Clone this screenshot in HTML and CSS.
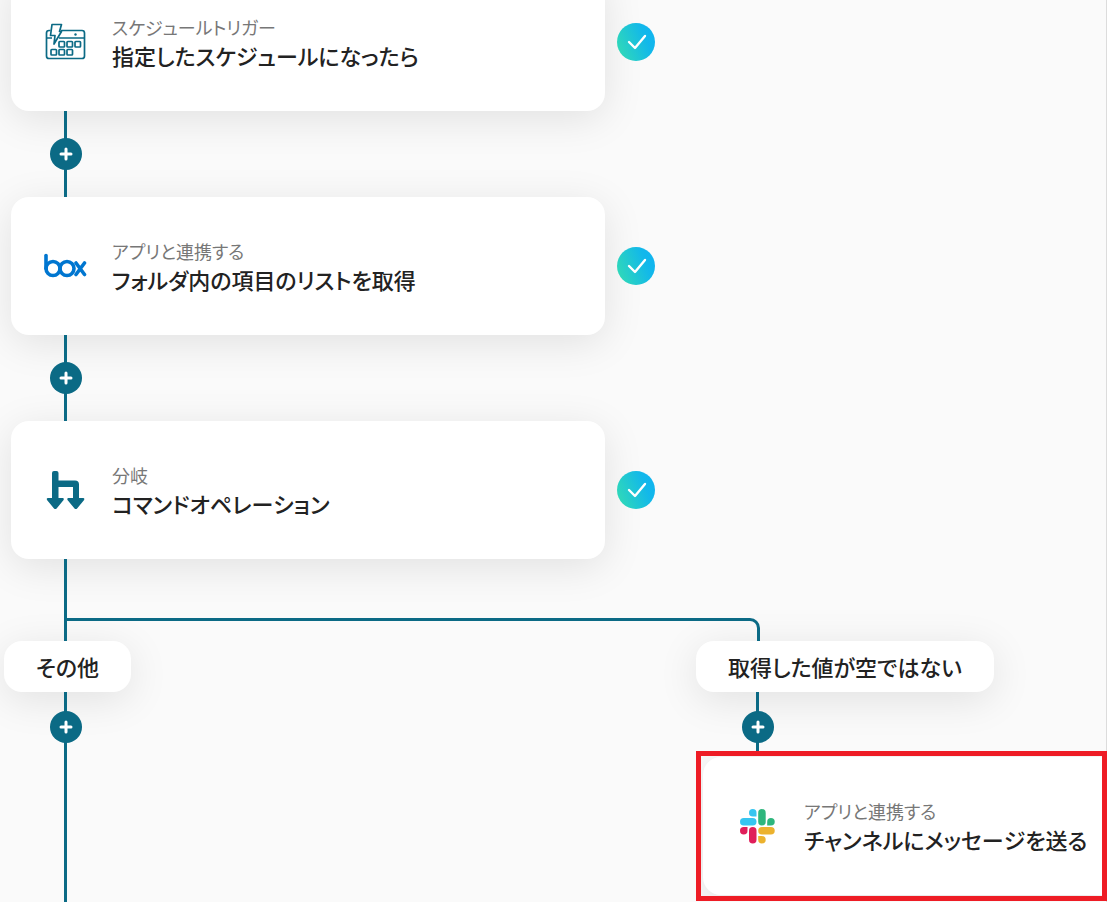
FILE: index.html
```html
<!DOCTYPE html>
<html lang="ja">
<head>
<meta charset="utf-8">
<title>フロー</title>
<link rel="stylesheet" href="styles.css">
</head>
<body>
<svg class="defs" aria-hidden="true">
  <defs>
    <linearGradient id="done" x1="0" y1="0.7" x2="1" y2="0.3">
      <stop offset="0" stop-color="#30d9b8"/>
      <stop offset="0.75" stop-color="#12b8ea"/>
      <stop offset="1" stop-color="#10b4f0"/>
    </linearGradient>
    <symbol id="check" viewBox="0 0 38 38">
      <circle cx="19" cy="19" r="19" fill="url(#done)"/>
      <path d="M12 19l6 6 10-12" fill="none" stroke="#fff" stroke-width="2.4" stroke-linecap="round" stroke-linejoin="round"/>
    </symbol>
    <symbol id="plus" viewBox="0 0 32 32">
      <path d="M16 11v10M11 16h10" fill="none" stroke="#fff" stroke-width="3" stroke-linecap="round"/>
    </symbol>
  </defs>
</svg>
<main class="flow">
  <section class="trunk">
    <div class="step">
      <article class="card">
        <svg class="icon" viewBox="0 0 44 44" fill="none" stroke="#0b6a85" stroke-width="1.7" stroke-linejoin="round">
          <path d="M7.500 10.500H6A2.500 2.500 0 0 0 3.500 13v23a2.500 2.500 0 0 0 2.500 2.500h33a2.500 2.500 0 0 0 2.500-2.500V13a2.500 2.500 0 0 0-2.500-2.500H18"/>
          <path d="M3.500 18H9M16 18h25.500"/>
          <path d="M9 4.500h9.500l-2 7h2L11 24l1-8.500H7.500z"/>
          <rect x="16" y="21.500" width="5.500" height="5.500" rx="0.8"/>
          <rect x="24" y="21.500" width="5.500" height="5.500" rx="0.8"/>
          <rect x="32" y="21.500" width="5.500" height="5.500" rx="0.8"/>
          <rect x="8" y="29.500" width="5.500" height="5.500" rx="0.8"/>
          <rect x="16" y="29.500" width="5.500" height="5.500" rx="0.8"/>
          <rect x="24" y="29.500" width="5.500" height="5.500" rx="0.8"/>
          <circle cx="32.500" cy="14.500" r="1.200" fill="#0b6a85" stroke="none"/>
        </svg>
        <div class="text">
          <p class="kind">スケジュールトリガー</p>
          <h2 class="name">指定したスケジュールになったら</h2>
        </div>
      </article>
      <svg class="done" role="img" aria-label="完了"><use href="#check"/></svg>
    </div>
    <div class="link">
      <button class="add" type="button" aria-label="追加"><svg class="sign"><use href="#plus"/></svg></button>
    </div>
    <div class="step">
      <article class="card">
        <svg class="icon" viewBox="0 0 44 44" fill="none" stroke="#0076d0" stroke-width="3.6" stroke-linecap="round">
          <path d="M3 11.500v13"/>
          <circle cx="10" cy="24.500" r="7"/>
          <circle cx="24" cy="24.500" r="7"/>
          <path d="M33 19l8.500 11.500M41.500 19l-8.500 11.500"/>
        </svg>
        <div class="text">
          <p class="kind">アプリと連携する</p>
          <h2 class="name">フォルダ内の項目のリストを取得</h2>
        </div>
      </article>
      <svg class="done" role="img" aria-label="完了"><use href="#check"/></svg>
    </div>
    <div class="link">
      <button class="add" type="button" aria-label="追加"><svg class="sign"><use href="#plus"/></svg></button>
    </div>
    <div class="step">
      <article class="card">
        <svg class="icon" viewBox="0 0 44 44" fill="#0b6a85">
          <path d="M9 5q0-2 2-2h2.500q2 0 2 2v7.500H32q4 0 4 4V30h4.500q1.500.5.6 1.900l-7 8.600q-1.300 1.200-2.600 0l-7-8.600q-.9-1.400.6-1.900H30V19H15.500v11H20q1.500.5.6 1.900l-7 8.600q-1.300 1.200-2.600 0l-7-8.600q-.9-1.400.6-1.900H9z"/>
        </svg>
        <div class="text">
          <p class="kind">分岐</p>
          <h2 class="name">コマンドオペレーション</h2>
        </div>
      </article>
      <svg class="done" role="img" aria-label="完了"><use href="#check"/></svg>
    </div>
  </section>
  <div class="fork"><div class="arm"></div></div>
  <section class="lanes">
    <div class="lane">
      <h3 class="case">その他</h3>
      <div class="rail open">
        <button class="add" type="button" aria-label="追加"><svg class="sign"><use href="#plus"/></svg></button>
      </div>
    </div>
    <div class="lane">
      <h3 class="case">取得した値が空ではない</h3>
      <div class="rail">
        <button class="add" type="button" aria-label="追加"><svg class="sign"><use href="#plus"/></svg></button>
      </div>
      <div class="mark">
        <article class="card">
          <svg class="icon" viewBox="0 0 44 44">
            <g fill="#36c5f0"><rect x="5" y="14" width="16.500" height="7.500" rx="3.750"/><path d="M21.500 12.500h-3.750A3.750 3.750 0 1 1 21.500 8.750z"/></g>
            <g fill="#2eb67d"><rect x="23.200" y="5" width="7.500" height="16.500" rx="3.750"/><path d="M32.200 21.500v-3.750a3.750 3.750 0 1 1 3.750 3.750z"/></g>
            <g fill="#ecb22e"><rect x="23.200" y="23" width="16.500" height="7.500" rx="3.750"/><path d="M23.200 32h3.750a3.750 3.750 0 1 1-3.750 3.750z"/></g>
            <g fill="#e01e5a"><rect x="14" y="23" width="7.500" height="16.500" rx="3.750"/><path d="M12.500 23v3.750A3.750 3.750 0 1 1 8.750 23z"/></g>
          </svg>
          <div class="text">
            <p class="kind">アプリと連携する</p>
            <h2 class="name">チャンネルにメッセージを送る</h2>
          </div>
        </article>
      </div>
    </div>
  </section>
</main>
</body>
</html>
```
FILE: styles.css
```css
* {
  box-sizing: border-box;
}

body {
  margin: 0;
  overflow: hidden;
  background: #fafafa;
  color: #222;
  font-family: "Noto Sans CJK JP", sans-serif;
  font-feature-settings: "palt";
  font-kerning: none;
}

.defs {
  position: absolute;
  width: 0;
  height: 0;
}

.flow {
  display: flex;
  flex-direction: column;
  min-height: 100vh;
  padding-left: 4px;
  box-shadow: inset -1px 0 #dcdcdc;
}

/* The list is scrolled a little past the first card's top edge. */
.trunk {
  margin-top: -27px;
  padding-left: 7px;
}

.step {
  display: flex;
  align-items: center;
  gap: 12px;
}

.card {
  display: flex;
  align-items: center;
  gap: 25px;
  width: 594px;
  max-width: 100%;
  height: 138px;
  padding: 0 32px;
  border-radius: 18px;
  background: #fff;
  box-shadow: 0 8px 40px rgba(0, 0, 0, 0.1);
}

.icon {
  flex: none;
  width: 44px;
  height: 44px;
}

.kind,
.name,
.case {
  margin: 0;
  white-space: nowrap;
}

.kind {
  color: #777;
  font-size: 18px;
  line-height: 27px;
}

.name {
  font-size: 22px;
  font-weight: 500;
  line-height: 29px;
}

.done {
  flex: none;
  width: 38px;
  height: 38px;
}

.link,
.rail {
  position: relative;
  display: flex;
  width: 32px;
  background: linear-gradient(#0b6a85, #0b6a85) 14px 0 / 3px 100% no-repeat;
}

.link {
  align-items: center;
  height: 86px;
  margin-left: 39px;
}

.add {
  width: 32px;
  height: 32px;
  padding: 0;
  border: 0;
  border-radius: 50%;
  background: #0b6a85;
}

.sign {
  display: block;
  width: 32px;
  height: 32px;
}

.fork {
  position: relative;
  width: 696px;
  margin-left: 60px;
  padding-top: 59px;
  border-left: 3px solid #0b6a85;
}

.arm {
  height: 23px;
  border: solid #0b6a85;
  border-width: 3px 3px 0 0;
  border-top-right-radius: 10px;
}

.lanes {
  display: grid;
  flex: 1;
  grid-template-columns: 692px minmax(0, 1fr);
}

.lane {
  display: flex;
  flex-direction: column;
  align-items: flex-start;
}

.case {
  padding: 0 32px;
  border-radius: 18px;
  background: #fff;
  box-shadow: 0 8px 40px rgba(0, 0, 0, 0.1);
  font-size: 22px;
  font-weight: 500;
  line-height: 51px;
}

.rail {
  height: 59px;
  margin-left: 46px;
  padding-top: 19px;
}

.open {
  flex: 1;
}

.mark {
  position: relative;
  align-self: stretch;
  height: 150px;
  padding: 1px 0 0 2px;
  border: 5px solid #ee1c25;
  overflow: hidden;
}

.mark .card {
  padding-right: 0;
  border-top-right-radius: 0;
  border-bottom-right-radius: 0;
}
```
